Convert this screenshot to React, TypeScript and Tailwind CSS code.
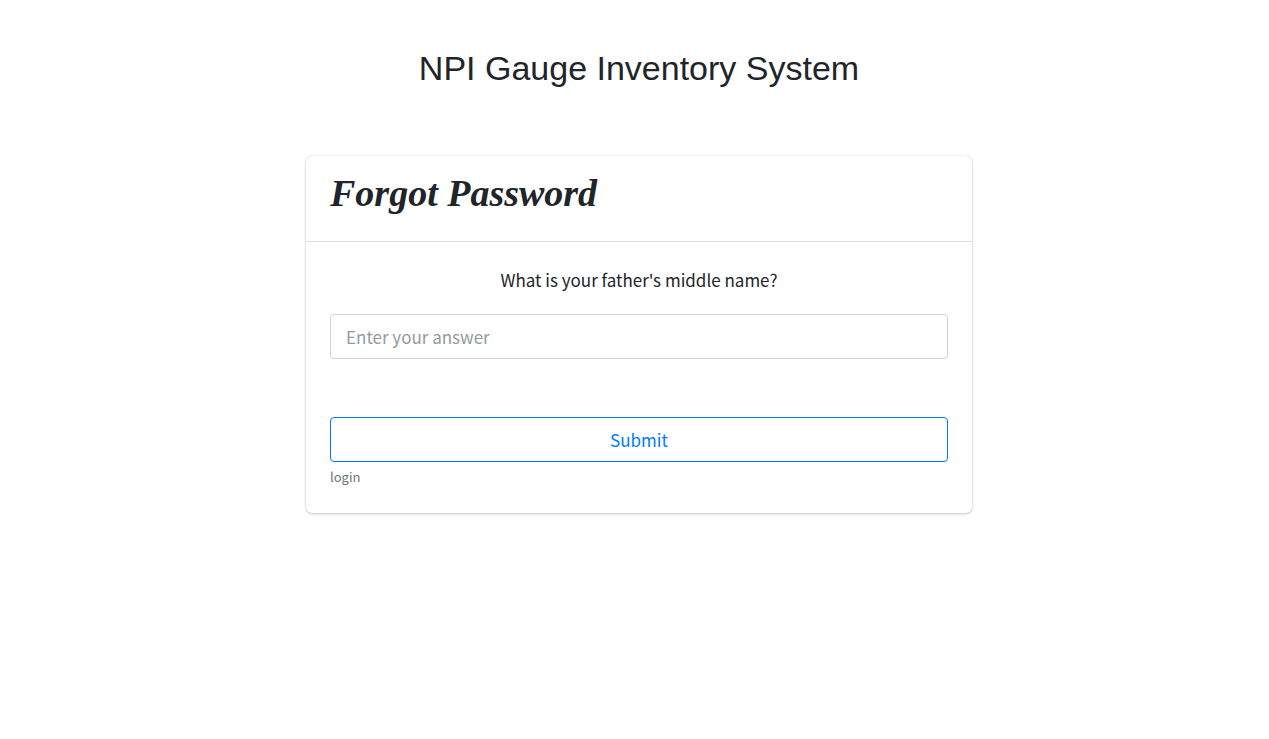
import React from "react";

export default function App() {
  return (
    <main className="flex min-h-screen flex-col items-center bg-white pl-[9px] pt-11 font-['Noto_Sans_CJK_JP','Noto_Sans',sans-serif] text-[#212529]">
      <h1 className="text-center font-['Liberation_Sans',Arial,sans-serif] text-[34px] leading-12">
        NPI Gauge Inventory System
      </h1>

      <section className="mt-16 w-full max-w-[666px] rounded-md bg-white shadow-[0_0_1px_rgba(0,0,0,0.25),0_1px_3px_rgba(0,0,0,0.2)]">
        <header className="border-b border-[#dfdfdf] px-6 pb-6 pt-[13px]">
          <h2 className="font-['Brush_Script_MT','Liberation_Serif',serif] text-[38px] font-bold italic leading-12">
            Forgot Password
          </h2>
        </header>

        <form className="flex flex-col px-6 pb-6 pt-[22px]" onSubmit={(e) => e.preventDefault()}>
          <label htmlFor="answer" className="text-center text-[17px] leading-8">
            What is your father's middle name?
          </label>
          <input
            id="answer"
            type="text"
            placeholder="Enter your answer"
            className="mt-[18px] h-[45px] w-full rounded border border-[#ced4da] px-[15px] text-[17px] text-[#495057] outline-none placeholder:text-[#939ba2] placeholder:opacity-100 focus:border-[#80bdff]"
          />
          <button
            type="submit"
            className="mt-[58px] h-[45px] w-full cursor-pointer rounded border border-[#007bff] text-[17px] text-[#007bff] hover:bg-[#007bff] hover:text-white"
          >
            Submit
          </button>
          <a href="#login" className="mt-[3px] self-start text-[13px] leading-6 text-[#6c757d]">
            login
          </a>
        </form>
      </section>
    </main>
  );
}
